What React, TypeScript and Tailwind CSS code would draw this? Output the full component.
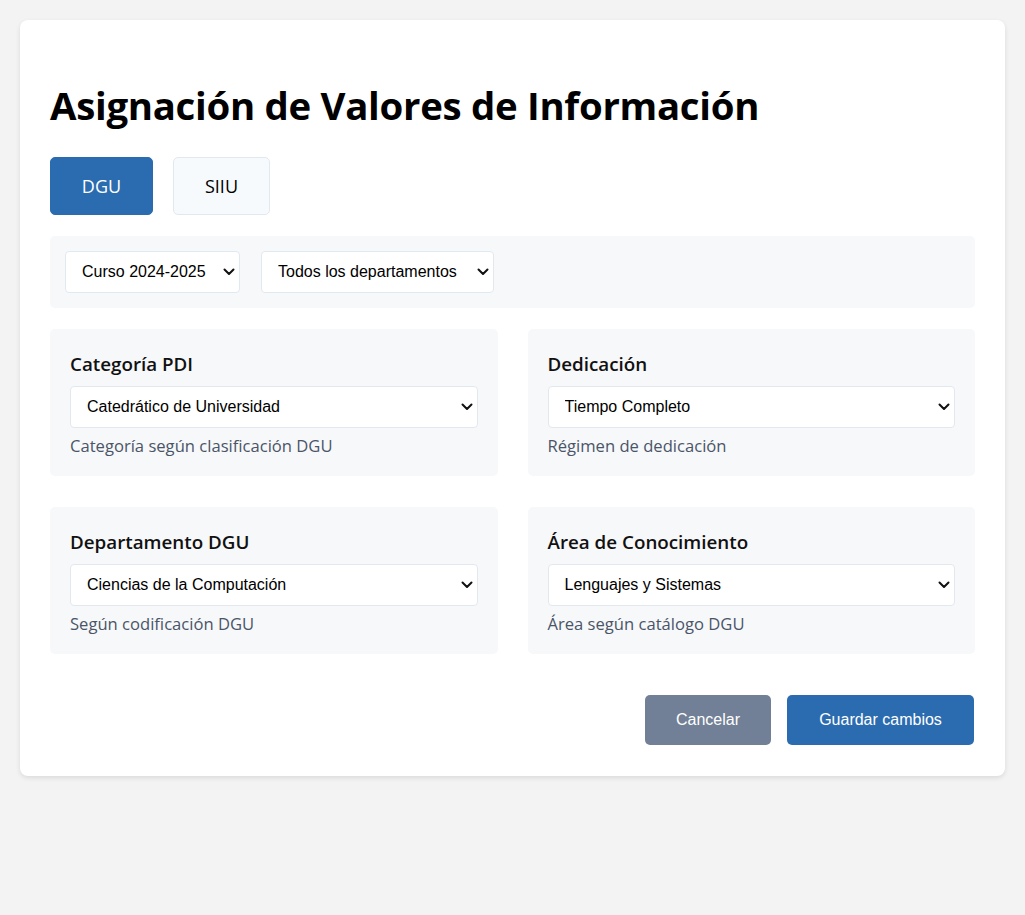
import React from "react";

const fields = [
  {
    label: "Categoría PDI",
    value: "Catedrático de Universidad",
    options: ["Catedrático de Universidad", "Titular de Universidad", "Profesor Contratado Doctor", "Ayudante Doctor"],
    help: "Categoría según clasificación DGU",
  },
  {
    label: "Dedicación",
    value: "Tiempo Completo",
    options: ["Tiempo Completo", "Tiempo Parcial"],
    help: "Régimen de dedicación",
  },
  {
    label: "Departamento DGU",
    value: "Ciencias de la Computación",
    options: ["Ciencias de la Computación", "Matemáticas", "Física"],
    help: "Según codificación DGU",
  },
  {
    label: "Área de Conocimiento",
    value: "Lenguajes y Sistemas",
    options: ["Lenguajes y Sistemas", "Arquitectura de Computadores", "Ingeniería Telemática"],
    help: "Área según catálogo DGU",
  },
];

const ui = { fontFamily: '"Open Sans", "Noto Sans", sans-serif' };
const arial = { fontFamily: '"Liberation Sans", Arial, sans-serif' };

function Chevron() {
  return (
    <svg
      className="pointer-events-none absolute top-1/2 right-[5px] -translate-y-1/2"
      width="12"
      height="8"
      viewBox="0 0 12 8"
      fill="none"
    >
      <path d="M1.5 1.5 6 6l4.5-4.5" stroke="#111" strokeWidth="2" strokeLinecap="round" strokeLinejoin="round" />
    </svg>
  );
}

function Select({
  defaultValue,
  options,
  className,
}: {
  defaultValue: string;
  options: { value: string; label: string }[];
  className: string;
}) {
  return (
    <div className={`relative ${className}`}>
      <select
        defaultValue={defaultValue}
        className="block h-[42px] w-full appearance-none rounded-[4px] border border-[#e2e8f0] bg-white pr-[24px] pl-[16px] text-[16px] text-black outline-none"
        style={arial}
      >
        {options.map((o) => (
          <option key={o.value} value={o.value}>
            {o.label}
          </option>
        ))}
      </select>
      <Chevron />
    </div>
  );
}

export default function App() {
  return (
    <div className="min-h-screen bg-[#f3f3f3] p-5" style={ui}>
      <div className="rounded-lg bg-white px-[30px] pt-[30px] pb-[31px] shadow-[0_2px_5px_rgba(0,0,0,0.1)]">
        <h1 className="mt-[29px] mb-[25px] text-[38.4px] leading-[53px] font-bold tracking-[-0.3px] text-black">
          Asignación de Valores de Información
        </h1>

        <div className="flex gap-5">
          <button className="h-[58px] w-[103px] rounded-[5px] border border-[#2b6cb0] bg-[#2b6cb0] text-[18px] text-white">
            DGU
          </button>
          <button className="h-[58px] w-[97px] rounded-[5px] border border-[#e2e8f0] bg-[#f7fafc] text-[18px] text-black">
            SIIU
          </button>
        </div>

        <div className="mt-[21px] flex gap-[21px] rounded-[5px] bg-[#f7f8fa] p-[15px]">
          <Select
            className="w-[175px]"
            defaultValue="2024-2025"
            options={[
              { value: "2024-2025", label: "Curso 2024-2025" },
              { value: "2023-2024", label: "Curso 2023-2024" },
            ]}
          />
          <Select
            className="w-[233px]"
            defaultValue="all"
            options={[
              { value: "all", label: "Todos los departamentos" },
              { value: "cc", label: "Ciencias de la Computación" },
            ]}
          />
        </div>

        <div className="mt-[21px] grid grid-cols-2 gap-x-[30px] gap-y-[31px]">
          {fields.map((f) => (
            <div key={f.label} className="rounded-[5px] bg-[#f7f8fa] px-5 pt-[22px] pb-[19px]">
              <label className="block text-[18.8px] leading-[26px] font-semibold text-[#111]">{f.label}</label>
              <Select
                className="mt-[9px] w-full"
                defaultValue={f.value}
                options={f.options.map((o) => ({ value: o, label: o }))}
              />
              <p className="mt-[7px] text-[16.6px] leading-[22px] text-[#4a5568]">{f.help}</p>
            </div>
          ))}
        </div>

        <div className="mt-[41px] mr-px flex justify-end gap-[16px]">
          <button className="h-[50px] w-[126px] rounded-[5px] bg-[#718096] text-[16px] text-white" style={arial}>
            Cancelar
          </button>
          <button className="h-[50px] w-[187px] rounded-[5px] bg-[#2b6cb0] text-[16px] text-white" style={arial}>
            Guardar cambios
          </button>
        </div>
      </div>
    </div>
  );
}
